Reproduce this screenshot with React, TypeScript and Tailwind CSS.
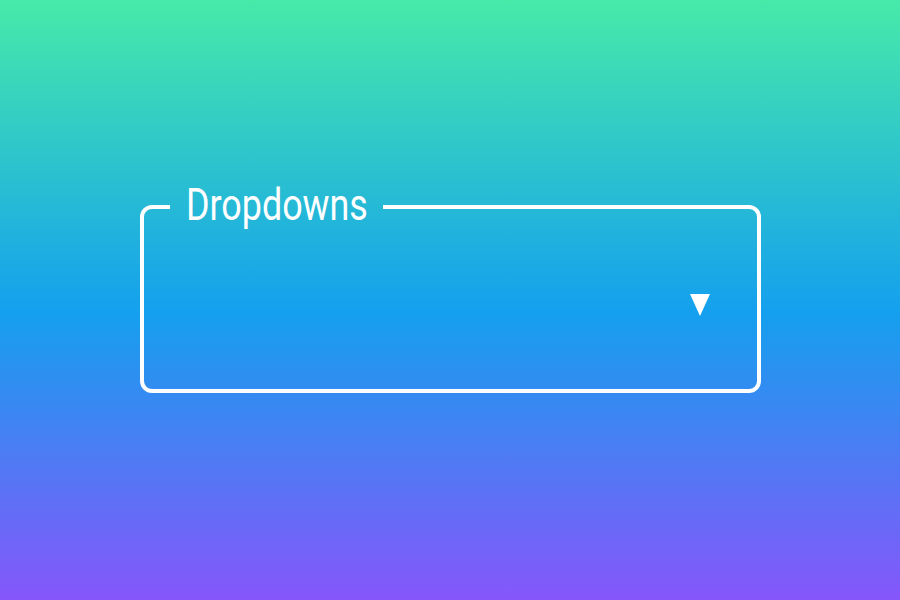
import React from 'react';

// Outlined select box with a floating label cut into the top border
const Dropdown = ({ label }: { label: string }) => (
  <fieldset className="w-[621px] rounded-[12px] border-4 border-white px-[26px] mb-[23px]">
    <legend
      className="pl-[16px] pr-[18px] text-[44px] leading-[44px] text-white"
      style={{ fontFamily: 'Roboto, "Liberation Sans", sans-serif' }}
    >
      <span className="block w-[179px] whitespace-nowrap">
        <span className="block origin-left scale-x-[0.815] -translate-y-[2px] font-normal">
          {label}
        </span>
      </span>
    </legend>
    <div className="flex h-[160px] items-center justify-end pr-[21px] pb-[7px]">
      <svg width="20" height="22" viewBox="0 0 20 22" className="block">
        <polygon points="0,0 20,0 10,22" fill="#fff" />
      </svg>
    </div>
  </fieldset>
);

export default function App() {
  return (
    <div className="flex h-screen w-full items-center justify-center bg-linear-to-b/srgb from-[#47eaa9] via-[#14a0ee] via-52% to-[#8656fa]">
      <Dropdown label="Dropdowns" />
    </div>
  );
}
